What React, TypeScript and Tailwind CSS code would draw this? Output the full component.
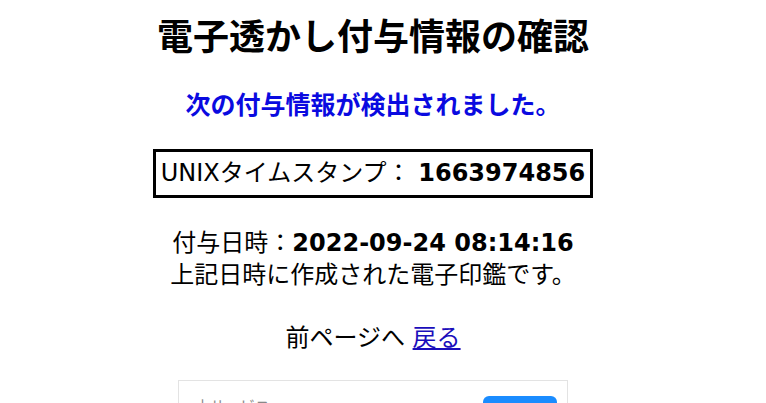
export default function App() {
  return (
    <div
      className="w-[746px] bg-white text-black"
      style={{ fontFamily: '"DejaVu Sans", "Noto Sans CJK JP", sans-serif' }}
    >
      <div className="flex flex-col items-center text-center">
        <h1 className="mt-[11px] text-[36px] leading-[54px] font-bold">電子透かし付与情報の確認</h1>
        <p className="mt-[25px] text-[25px] leading-[32px] font-bold text-[#0a0ae0]">次の付与情報が検出されました。</p>
        <div className="mt-[27px] border-[3px] border-black px-[5px] text-[24px] leading-[43px]">
          UNIXタイムスタンプ： <span className="font-bold">1663974856</span>
        </div>
        <div className="mt-[29px] text-[24px] leading-[32px]">
          <p>
            付与日時：<span className="font-bold">2022-09-24 08:14:16</span>
          </p>
          <p>上記日時に作成された電子印鑑です。</p>
        </div>
        <p className="mt-[31px] text-[24px] leading-[32px]">
          前ページへ <a href="#" className="text-[#1a0dbb] underline">戻る</a>
        </p>
        <div className="mt-[26px] flex h-[60px] w-[390px] items-start justify-between border border-[#e3e3e3] pr-[10px] pl-[16px] pt-[15px]">
          <span className="text-[15px] text-[#888]">本サービス</span>
          <span className="h-[30px] w-[74px] rounded-[6px] bg-[#1a8cff]" />
        </div>
      </div>
    </div>
  );
}
